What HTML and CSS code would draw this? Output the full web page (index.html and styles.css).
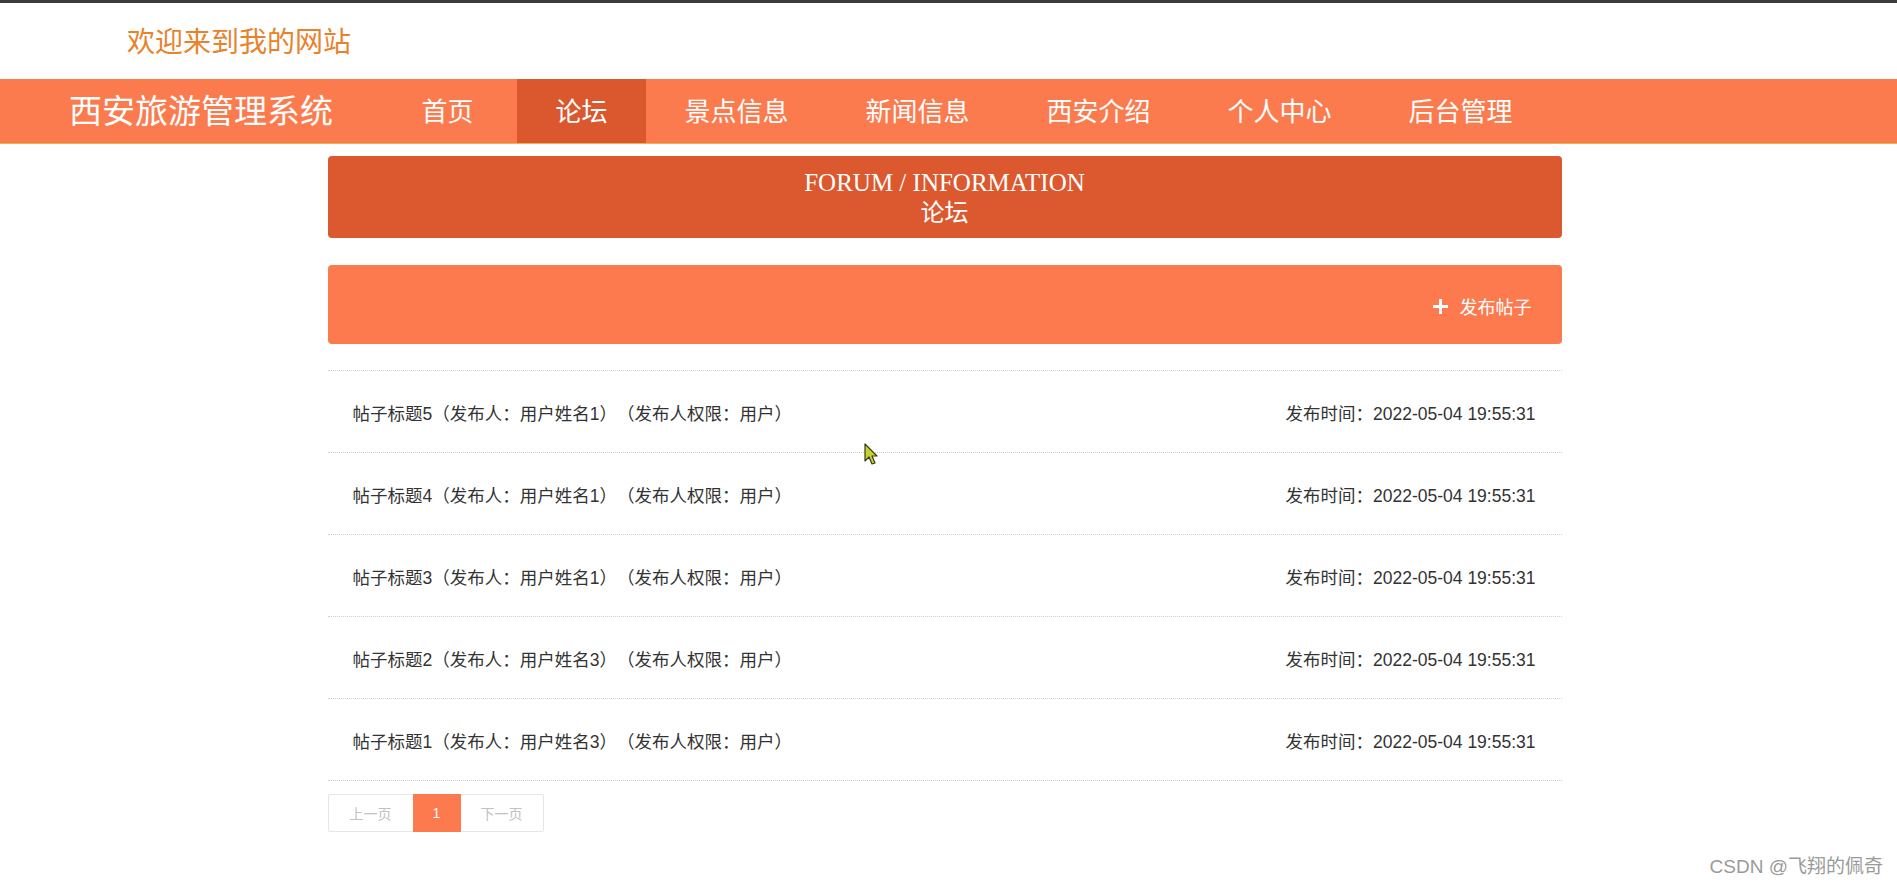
FILE: index.html
```html
<!DOCTYPE html>
<html lang="zh-CN">
<head>
<meta charset="utf-8">
<title>西安旅游管理系统 - 论坛</title>
<link rel="stylesheet" href="styles.css">
</head>
<body>
<div class="topline"></div>
<header class="welcome">欢迎来到我的网站</header>
<nav class="navbar">
  <div class="brand">西安旅游管理系统</div>
  <ul class="menu">
    <li class="item first">首页</li>
    <li class="item active">论坛</li>
    <li class="item">景点信息</li>
    <li class="item">新闻信息</li>
    <li class="item">西安介绍</li>
    <li class="item">个人中心</li>
    <li class="item">后台管理</li>
  </ul>
</nav>
<main class="container">
  <section class="banner">
    <div class="banner-en">FORUM / INFORMATION</div>
    <div class="banner-cn">论坛</div>
  </section>
  <section class="toolbar">
    <span class="publish"><span class="plus"></span>发布帖子</span>
  </section>
  <ul class="posts">
    <li class="post"><span class="post-title">帖子标题5（发布人：用户姓名1）（发布人权限：用户）</span><span class="post-time">发布时间：2022-05-04 19:55:31</span></li>
    <li class="post"><span class="post-title">帖子标题4（发布人：用户姓名1）（发布人权限：用户）</span><span class="post-time">发布时间：2022-05-04 19:55:31</span></li>
    <li class="post"><span class="post-title">帖子标题3（发布人：用户姓名1）（发布人权限：用户）</span><span class="post-time">发布时间：2022-05-04 19:55:31</span></li>
    <li class="post"><span class="post-title">帖子标题2（发布人：用户姓名3）（发布人权限：用户）</span><span class="post-time">发布时间：2022-05-04 19:55:31</span></li>
    <li class="post"><span class="post-title">帖子标题1（发布人：用户姓名3）（发布人权限：用户）</span><span class="post-time">发布时间：2022-05-04 19:55:31</span></li>
  </ul>
  <div class="pager">
    <span class="page prev">上一页</span>
    <span class="page current">1</span>
    <span class="page next">下一页</span>
  </div>
</main>
<div class="watermark">CSDN @飞翔的佩奇</div>
<svg class="cursor" width="16" height="24" viewBox="0 0 16 24"><path d="M1 1 L1 18 L5 14 L8 21 L11 20 L8 13 L13 13 Z" fill="#c5d42c" stroke="#3a3a1a" stroke-width="1.2" stroke-linejoin="round"/></svg>
</body>
</html>
```
FILE: styles.css
```css
* { box-sizing: border-box; }
html, body { margin: 0; padding: 0; }
body {
  background: #ffffff;
  font-family: "Liberation Sans", "Noto Sans CJK SC", sans-serif;
  color: #333;
  position: relative;
  min-height: 886px;
  overflow: hidden;
  text-spacing-trim: space-all;
}
.topline { height: 3px; background: #3b3b3b; }
.welcome {
  height: 76px;
  line-height: 74px;
  padding-left: 127px;
  font-family: "Noto Sans CJK SC", sans-serif;
  font-size: 28px;
  color: #e8832c;
}
.navbar {
  display: flex;
  height: 65px;
  background: #fc7b4e;
  border-bottom: 1px solid #eeb245;
}
.brand {
  padding-left: 69px;
  font-family: "Noto Sans CJK SC", sans-serif;
  font-size: 33px;
  line-height: 60px;
  color: #fff;
}
.menu {
  display: flex;
  list-style: none;
  margin: 0 0 0 50px;
  padding: 0;
}
.item {
  height: 64px;
  padding: 0 38.5px;
  font-family: "Noto Sans CJK SC", sans-serif;
  font-size: 26px;
  line-height: 61px;
  color: #fff;
}
.item.first { margin-right: 5px; }
.item.active { background: #db582f; }
.container {
  width: 1234px;
  margin: 12px auto 0;
  position: relative;
  left: -4px;
}
.banner {
  height: 82px;
  padding-top: 12px;
  background: #dc582f;
  border-radius: 4px;
  text-align: center;
  color: #fff;
}
.banner-en {
  font-family: "Liberation Serif", serif;
  font-size: 25px;
  line-height: 30px;
}
.banner-cn {
  font-family: "Noto Sans CJK SC", serif;
  font-size: 24px;
  line-height: 26px;
}
.toolbar {
  margin-top: 27px;
  height: 79px;
  background: #fc7a4e;
  border-radius: 4px;
  display: flex;
  justify-content: flex-end;
  align-items: center;
  padding: 3px 30px 0 0;
}
.publish {
  display: flex;
  align-items: center;
  color: #fff;
  font-family: "Noto Sans CJK SC", sans-serif;
  font-size: 18px;
}
.plus {
  position: relative;
  width: 15px;
  height: 15px;
  margin-right: 12px;
}
.plus::before, .plus::after {
  content: "";
  position: absolute;
  background: #fff;
}
.plus::before { left: 0; top: 6px; width: 15px; height: 3px; }
.plus::after { left: 6px; top: 0; width: 3px; height: 15px; }
.posts {
  list-style: none;
  margin: 26px 0 0;
  padding: 0;
  border-top: 1px dotted #cfcfcf;
}
.post {
  height: 82px;
  display: flex;
  justify-content: space-between;
  align-items: center;
  padding: 2px 26px 0 25px;
  border-bottom: 1px dotted #cfcfcf;
  font-size: 17.5px;
  color: #333;
}
.pager {
  margin-top: 13px;
  display: flex;
}
.page {
  height: 38px;
  line-height: 36px;
  border: 1px solid #e6e6e6;
  text-align: center;
  font-family: "Noto Sans CJK SC", sans-serif;
  font-size: 14px;
  color: #c2c2c2;
}
.prev { width: 85px; border-radius: 2px 0 0 2px; border-right: none; }
.current {
  width: 48px;
  background: #fc7a4e;
  border-color: #fc7a4e;
  color: #fff;
  font-family: "Liberation Sans", sans-serif;
}
.next { width: 83px; border-radius: 0 2px 2px 0; border-left: none; }
.watermark {
  position: absolute;
  right: 14px;
  top: 855px;
  font-size: 19px;
  line-height: 24px;
  color: #9a9a9a;
}
.cursor {
  position: absolute;
  left: 864px;
  top: 443px;
}
```
